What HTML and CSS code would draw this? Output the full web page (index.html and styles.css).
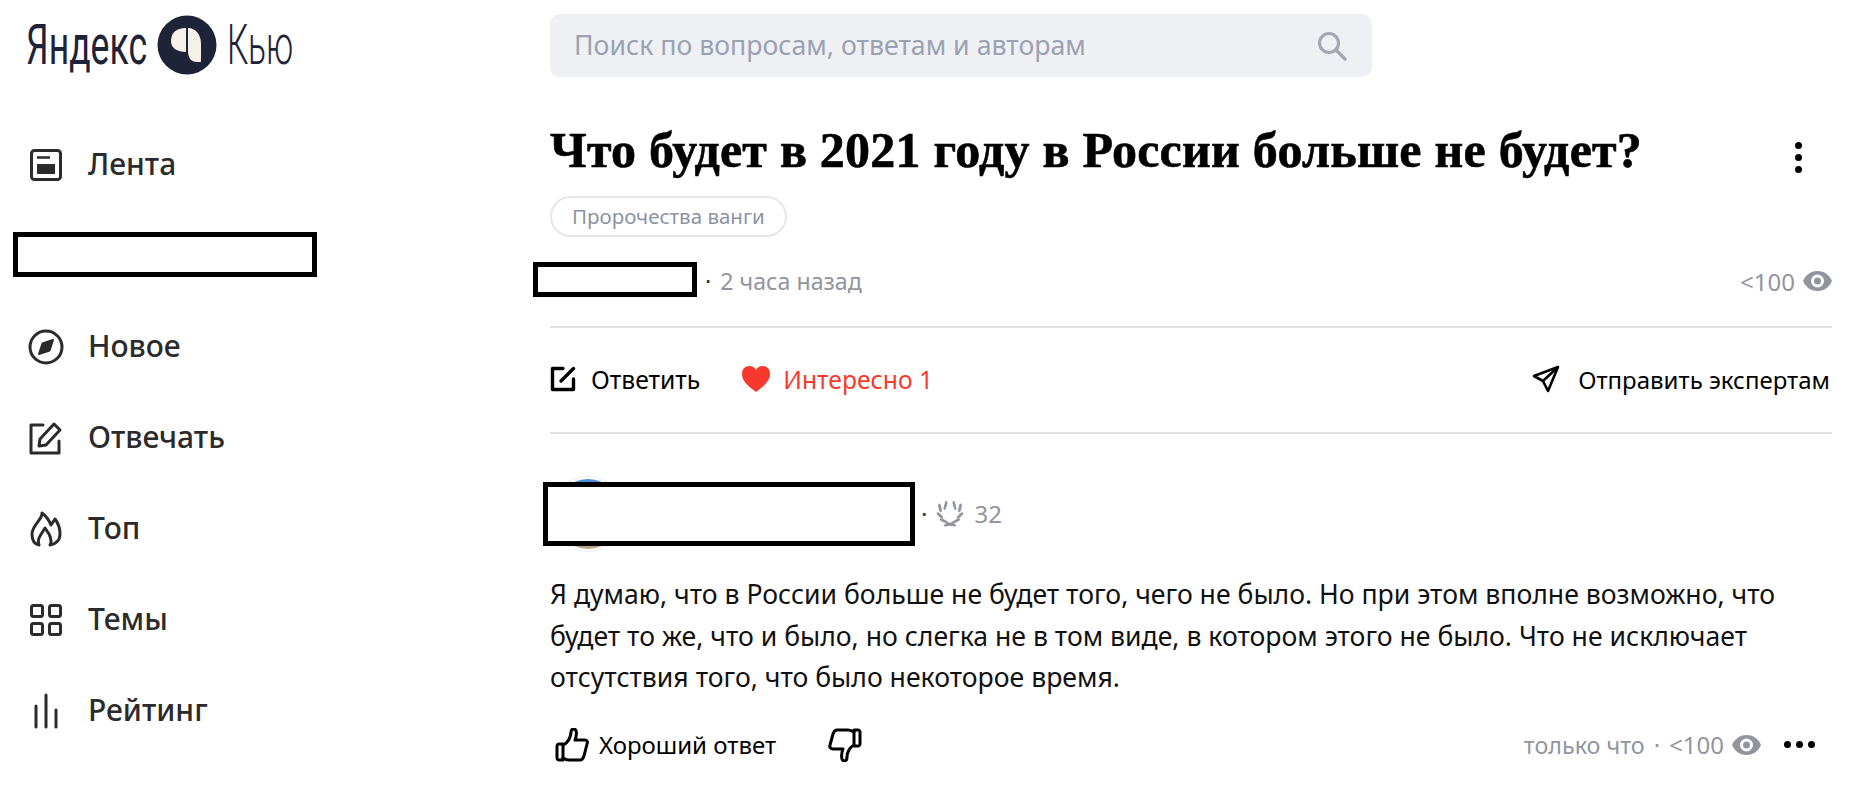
FILE: index.html
```html
<!DOCTYPE html>
<html lang="ru">
<head>
  <meta charset="UTF-8">
  <title>Что будет в 2021 году в России больше не будет?</title>
  <link rel="stylesheet" href="styles.css">
</head>
<body>
  <div class="page">
    <!-- Sidebar -->
    <aside class="sidebar">
      <div class="logo">
        <span class="logo_yandex">Яндекс</span>
        <svg class="logo_mark" width="60" height="60" viewBox="0 0 60 60">
          <circle cx="30" cy="30" r="29.5" fill="#1f2338"/>
          <path d="M29 13C19 13 14 18 14 26c0 7 6 11 15 11z" fill="#f5f0e8"/>
          <path d="M31 13c8 0 13 7 13 16v18h-4c-6 0-9-4-9-11z" fill="#f5f0e8"/>
        </svg>
        <span class="logo_q">Кью</span>
      </div>
      <nav class="nav">
        <a class="nav_item">
          <span class="nav_icon"><svg width="32" height="32" viewBox="0 0 32 32" fill="none" stroke="#2b2b2b" stroke-width="3"><rect x="1.5" y="1.5" width="29" height="29" rx="3"/><path d="M7 8.500h13" stroke-width="2.500"/><rect x="7" y="15" width="18" height="10" fill="#2b2b2b" stroke="none"/></svg></span>
          <span>Лента</span>
        </a>
        <a class="nav_item"></a>
        <a class="nav_item">
          <span class="nav_icon"><svg width="36" height="36" viewBox="0 0 36 36" fill="none" stroke="#2b2b2b" stroke-width="3"><circle cx="18" cy="18" r="16"/><path d="M25 11l-3.500 10.500L11 25l3.500-10.500z" fill="#2b2b2b" stroke-width="2" stroke-linejoin="round"/></svg></span>
          <span>Новое</span>
        </a>
        <a class="nav_item">
          <span class="nav_icon"><svg width="34" height="34" viewBox="0 0 34 34" fill="none" stroke="#2b2b2b" stroke-width="3" stroke-linejoin="round" stroke-linecap="round"><path d="M14 4H2v28h28V20"/><path d="M10 25l1-7L25 3l6 6-14 15z"/></svg></span>
          <span>Отвечать</span>
        </a>
        <a class="nav_item">
          <span class="nav_icon"><svg width="32" height="36" viewBox="0 0 32 36" fill="none" stroke="#2b2b2b" stroke-width="3" stroke-linejoin="round"><path d="M12 2C13 8 2 14 2 23c0 5 2 10 7 11-1-3-1-6 1-9l5-8 4 6c2 4 3 8 1 11 6-1 10-5 10-11 0-7-2-11-5-15l-4 6C19 9 16 5 12 2z"/></svg></span>
          <span>Топ</span>
        </a>
        <a class="nav_item">
          <span class="nav_icon"><svg width="32" height="32" viewBox="0 0 32 32" fill="none" stroke="#2b2b2b" stroke-width="3"><rect x="1.500" y="1.500" width="11" height="11" rx="2"/><rect x="19.500" y="1.500" width="11" height="11" rx="2"/><rect x="1.500" y="19.500" width="11" height="11" rx="2"/><rect x="19.500" y="19.500" width="11" height="11" rx="2"/></svg></span>
          <span>Темы</span>
        </a>
        <a class="nav_item">
          <span class="nav_icon"><svg width="32" height="36" viewBox="0 0 32 36" fill="none" stroke="#2b2b2b" stroke-width="3" stroke-linecap="round"><path d="M6 13v21M16 2v32M26 17v17"/></svg></span>
          <span>Рейтинг</span>
        </a>
      </nav>
      <div class="redact redact_nav"></div>
    </aside>

    <!-- Main column -->
    <main class="content">
      <div class="search">
        <span>Поиск по вопросам, ответам и авторам</span>
        <svg width="30" height="30" viewBox="0 0 30 30" fill="none" stroke="#a3a8b4" stroke-width="3.200" stroke-linecap="round"><circle cx="12" cy="12" r="9.500"/><path d="M19 19l9 9"/></svg>
      </div>

      <div class="title_row">
        <h1 class="title">Что будет в 2021 году в России больше не будет?</h1>
        <div class="kebab"><i></i><i></i><i></i></div>
      </div>

      <span class="tag">Пророчества ванги</span>

      <div class="meta">
        <div class="redact redact_author"></div>
        <span class="meta_dot">·</span>
        <span>2 часа назад</span>
        <span class="views">&lt;100
          <svg class="eye" width="29" height="20" viewBox="0 0 29 20"><path d="M14.500 0C22 0 27 5 29 10c-2 5-7 10-14.500 10S2 15 0 10C2 5 7 0 14.500 0z" fill="#92959e"/><circle cx="14.500" cy="10" r="6.500" fill="#fff"/><circle cx="14.500" cy="10" r="3.500" fill="#92959e"/></svg>
        </span>
      </div>

      <div class="actions">
        <a class="action">
          <svg width="26" height="26" viewBox="0 0 26 26" fill="none" stroke="#000" stroke-width="3.400" stroke-linejoin="round" stroke-linecap="round"><path d="M13 2.500H2.500v21H23.500V13"/><path d="M11 15L23.500 2.500"/></svg>
          <span>Ответить</span>
        </a>
        <a class="action action_red">
          <svg width="28" height="26" viewBox="0 0 28 26"><path d="M14 26C6 20 0 15 0 8c0-5 3-8 7.500-8C10 0 13 1.500 14 4c1-2.500 4-4 6.500-4C25 0 28 3 28 8c0 7-6 12-14 18z" fill="#f8392e"/></svg>
          <span>Интересно 1</span>
        </a>
        <a class="action action_send">
          <svg width="28" height="28" viewBox="0 0 28 28" fill="none" stroke="#000" stroke-width="2.600" stroke-linejoin="round"><path d="M26 2L2 11l9 5 5 10z"/><path d="M26 2L11 16"/></svg>
          <span>Отправить экспертам</span>
        </a>
      </div>

      <!-- Answer -->
      <section class="answer">
        <div class="answer_head">
          <div class="avatar"></div>
          <div class="redact redact_answer"></div>
          <span class="meta_dot">·</span>
          <svg class="laurel" width="28" height="27" viewBox="0 0 26 27" fill="#92959e">
            <g id="laurel_half">
              <ellipse cx="8.500" cy="5.500" rx="1.400" ry="4.800" transform="rotate(15 8.500 5.500)"/>
              <ellipse cx="3" cy="8" rx="1.500" ry="4.500" transform="rotate(-12 3 8)"/>
              <ellipse cx="3" cy="15.500" rx="1.500" ry="4.300" transform="rotate(-45 3 15.500)"/>
              <ellipse cx="7" cy="21" rx="1.500" ry="4.500" transform="rotate(-65 7 21)"/>
              <ellipse cx="12" cy="24.300" rx="1.400" ry="5.500" transform="rotate(75 12 24.300)"/>
            </g>
            <use href="#laurel_half" transform="translate(26 0) scale(-1 1)"/>
          </svg>
          <span class="karma">32</span>
        </div>

        <p class="answer_text">Я думаю, что в России больше не будет того, чего не было. Но при этом вполне возможно, что<br>будет то же, что и было, но слегка не в том виде, в котором этого не было. Что не исключает<br>отсутствия того, что было некоторое время.</p>

        <div class="answer_foot">
          <a class="action good">
            <svg width="34" height="34" viewBox="0 0 34 34" fill="none" stroke="#000" stroke-width="3" stroke-linejoin="round" stroke-linecap="round"><path d="M2 18c0-1 1-2 2-2h4v16H4c-1 0-2-1-2-2z"/><path d="M8 17c5-2 8-8 8-13 0-2 1-3 3-3 3 0 3 6 1 11h10c2 0 3 2 2 4l-3 12c-1 3-2 4-4 4H14c-3 0-4-1-6-2"/></svg>
            <span>Хороший ответ</span>
          </a>
          <svg class="thumb_down" width="34" height="34" viewBox="0 0 34 34" fill="none" stroke="#000" stroke-width="3" stroke-linejoin="round" stroke-linecap="round"><path d="M32 16c0 1-1 2-2 2h-4V2h4c1 0 2 1 2 2z"/><path d="M26 17c-4 2-7 7-7 12 0 2-1 4-3 4-3 0-3-7-1-12H5c-2 0-4-2-3-4L5 6c1-3 2-4 4-4h11c3 0 4 1 6 2"/></svg>
          <div class="foot_right">
            <span class="foot_time">только что</span>
            <span class="meta_dot">·</span>
            <span class="views_small">&lt;100
              <svg class="eye" width="29" height="20" viewBox="0 0 29 20"><path d="M14.500 0C22 0 27 5 29 10c-2 5-7 10-14.500 10S2 15 0 10C2 5 7 0 14.500 0z" fill="#92959e"/><circle cx="14.500" cy="10" r="6.500" fill="#fff"/><circle cx="14.500" cy="10" r="3.500" fill="#92959e"/></svg>
            </span>
            <div class="dots"><i></i><i></i><i></i></div>
          </div>
        </div>
      </section>
    </main>
  </div>
</body>
</html>
```

FILE: styles.css
```css
/* Shared */
body {
  margin: 0;
  background-color: #fff;
  font-family: "Noto Sans", "Liberation Sans", sans-serif;
  color: #000;
  overflow: hidden;
}
.page {
  display: flex;
  height: 798px;
}
.redact {
  position: absolute;
  box-sizing: border-box;
  border: 5px solid #000;
  background-color: #fff;
}

/* Sidebar */
.sidebar {
  position: relative;
  width: 550px;
  flex: none;
}
.logo {
  display: flex;
  align-items: center;
  height: 60px;
  margin: 15px 0 0 26px;
  color: #1f2338;
  font-family: "Roboto", sans-serif;
  font-size: 56px;
}
.logo_yandex {
  width: 120px;
  transform: scaleX(0.635);
  transform-origin: left center;
  white-space: nowrap;
}
.logo_mark {
  margin-left: 11px;
}
.logo_q {
  margin-left: 10px;
  font-weight: 300;
  transform: scaleX(0.6);
  transform-origin: left center;
}
.nav {
  margin-top: 44px;
}
.nav_item {
  display: flex;
  align-items: center;
  gap: 24px;
  height: 91px;
  padding-left: 28px;
  padding-bottom: 2px;
  box-sizing: border-box;
  color: #2b2b2b;
  font-size: 30px;
  font-weight: 500;
}
.nav_icon {
  display: flex;
  justify-content: center;
  flex: none;
  width: 36px;
  margin-bottom: -2px;
}
.redact_nav {
  left: 13px;
  top: 232px;
  width: 304px;
  height: 45px;
}

/* Main column */
.content {
  position: relative;
  width: 1282px;
  flex: none;
}
.search {
  display: flex;
  align-items: center;
  justify-content: space-between;
  width: 822px;
  height: 63px;
  box-sizing: border-box;
  margin-top: 14px;
  padding: 0 25px 0 24px;
  border-radius: 10px;
  background-color: #eff0f4;
  color: #9aa1b2;
  font-size: 26.700px;
}
.search span {
  margin-top: -3px;
}
.title_row {
  display: flex;
  align-items: center;
  justify-content: space-between;
  height: 60px;
  margin-top: 43px;
  margin-bottom: 1px;
}
.title {
  margin: 0;
  font-family: "Liberation Serif", serif;
  font-size: 50px;
  font-weight: bold;
  letter-spacing: 0.230px;
  -webkit-text-stroke: 0.600px #000;
  white-space: nowrap;
}
.kebab {
  display: flex;
  flex-direction: column;
  gap: 5px;
  margin-top: 14px;
  margin-right: 30px;
}
.kebab i, .dots i {
  display: block;
  width: 7px;
  height: 7px;
  border-radius: 50%;
  background-color: #000;
}
.tag {
  display: inline-block;
  box-sizing: border-box;
  height: 41px;
  margin-top: 15px;
  padding: 0 20px;
  border: 2px solid #e6e6e6;
  border-radius: 21px;
  color: #8c93a1;
  font-size: 20.500px;
  line-height: 37px;
}
.meta {
  display: flex;
  align-items: center;
  position: relative;
  height: 90px;
  padding-left: 155px;
  border-bottom: 2px solid #e0e0e0;
  margin-top: -1px;
  color: #92959e;
  font-size: 23.200px;
}
.meta_dot {
  margin-right: 9px;
  color: #333;
}
.redact_author {
  left: -17px;
  top: 26px;
  width: 164px;
  height: 35px;
}
.views {
  display: flex;
  align-items: center;
  gap: 8px;
  margin-left: auto;
  font-size: 24px;
}
.actions {
  display: flex;
  align-items: center;
  height: 102px;
  padding-bottom: 2px;
  border-bottom: 2px solid #e0e0e0;
  font-size: 24.700px;
}
.action {
  display: flex;
  align-items: center;
  gap: 15px;
}
.action_red {
  gap: 13px;
  margin-left: 42px;
  color: #f8392e;
}
.action_send {
  margin-left: auto;
  margin-right: 2px;
  gap: 18px;
  font-size: 24px;
}
.answer_head {
  position: relative;
  display: flex;
  align-items: center;
  height: 80px;
  margin-top: 40px;
  padding-left: 371px;
  padding-bottom: 2px;
  box-sizing: border-box;
  color: #92959e;
  font-size: 24px;
}
.avatar {
  position: absolute;
  left: 0;
  top: 2px;
  width: 76px;
  height: 76px;
  box-sizing: border-box;
  padding: 2px;
  border: 1px solid #ececec;
  border-radius: 50%;
  background: linear-gradient(#4a8fde 90%, #b9a58c 90%) content-box;
}
.redact_answer {
  left: -7px;
  top: 8px;
  width: 372px;
  height: 64px;
}
.karma {
  margin-left: 10px;
}
.answer_text {
  margin: 20px 0 0;
  color: #111;
  font-size: 26.600px;
  line-height: 41.500px;
}
.answer_foot {
  display: flex;
  align-items: center;
  height: 50px;
  margin-top: 21px;
  font-size: 24px;
}
.good {
  margin-left: 5px;
  gap: 10px;
}
.thumb_down {
  margin-left: 52px;
}
.foot_right {
  display: flex;
  align-items: center;
  margin-left: auto;
  margin-right: 17px;
  color: #92959e;
  font-size: 24px;
}
.foot_time {
  font-size: 23.300px;
}
.foot_right .meta_dot {
  margin: 0 9px;
  color: #92959e;
}
.views_small {
  display: flex;
  align-items: center;
  gap: 8px;
}
.dots {
  display: flex;
  gap: 5px;
  margin-left: 23px;
}
```
